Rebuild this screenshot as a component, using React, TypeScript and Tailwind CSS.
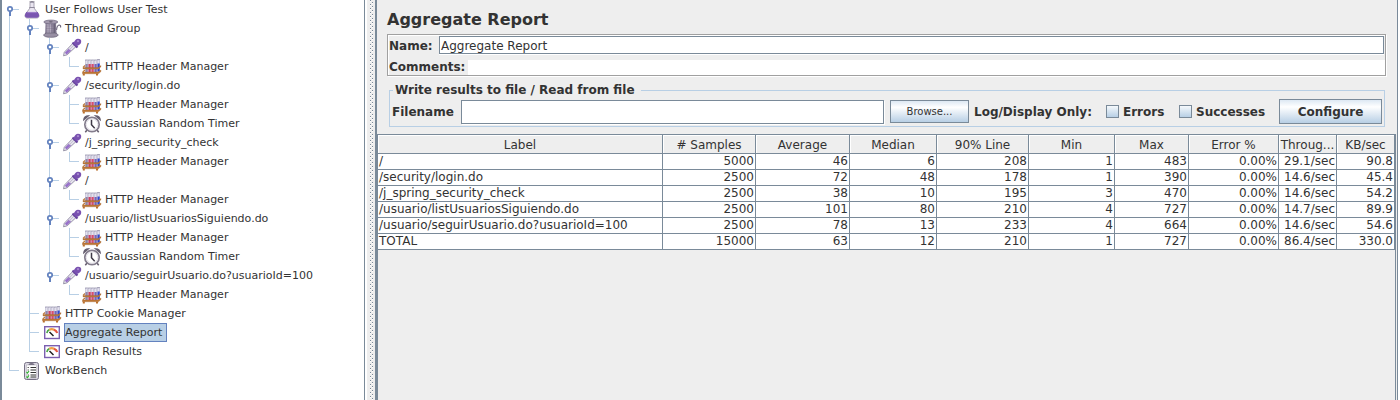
import type { ReactNode } from 'react';

type IconKind = 'flask' | 'spool' | 'dropper' | 'tubes' | 'clock' | 'gauge' | 'clipboard';

type Guide = 'none' | 'line' | 'tee' | 'end' | 'first' | 'handle' | 'handleEnd';

interface TreeRow {
  label: string;
  icon: IconKind;
  guides: Guide[];
  selected?: boolean;
}

const rows: TreeRow[] = [
  { label: 'User Follows User Test', icon: 'flask', guides: ['first'] },
  { label: 'Thread Group', icon: 'spool', guides: ['line', 'handle'] },
  { label: '/', icon: 'dropper', guides: ['line', 'line', 'handle'] },
  { label: 'HTTP Header Manager', icon: 'tubes', guides: ['line', 'line', 'line', 'end'] },
  { label: '/security/login.do', icon: 'dropper', guides: ['line', 'line', 'handle'] },
  { label: 'HTTP Header Manager', icon: 'tubes', guides: ['line', 'line', 'line', 'tee'] },
  { label: 'Gaussian Random Timer', icon: 'clock', guides: ['line', 'line', 'line', 'end'] },
  { label: '/j_spring_security_check', icon: 'dropper', guides: ['line', 'line', 'handle'] },
  { label: 'HTTP Header Manager', icon: 'tubes', guides: ['line', 'line', 'line', 'end'] },
  { label: '/', icon: 'dropper', guides: ['line', 'line', 'handle'] },
  { label: 'HTTP Header Manager', icon: 'tubes', guides: ['line', 'line', 'line', 'end'] },
  { label: '/usuario/listUsuariosSiguiendo.do', icon: 'dropper', guides: ['line', 'line', 'handle'] },
  { label: 'HTTP Header Manager', icon: 'tubes', guides: ['line', 'line', 'line', 'tee'] },
  { label: 'Gaussian Random Timer', icon: 'clock', guides: ['line', 'line', 'line', 'end'] },
  { label: '/usuario/seguirUsuario.do?usuarioId=100', icon: 'dropper', guides: ['line', 'line', 'handleEnd'] },
  { label: 'HTTP Header Manager', icon: 'tubes', guides: ['line', 'line', 'none', 'end'] },
  { label: 'HTTP Cookie Manager', icon: 'tubes', guides: ['line', 'tee'] },
  { label: 'Aggregate Report', icon: 'gauge', guides: ['line', 'tee'], selected: true },
  { label: 'Graph Results', icon: 'gauge', guides: ['line', 'end'] },
  { label: 'WorkBench', icon: 'clipboard', guides: ['end'] },
];

function GuideCell({ kind, last }: { kind: Guide; last: boolean }) {
  const top = kind === 'first' ? 9 : 0;
  const bottom = kind === 'end' || kind === 'handleEnd' ? 10 : 19;
  const branch = kind !== 'none' && kind !== 'line';
  const handle = kind === 'first' || kind === 'handle' || kind === 'handleEnd';
  return (
    <svg
      className={last ? 'h-[19px] w-[18px] shrink-0' : 'h-[19px] w-5 shrink-0'}
      viewBox={last ? '0 0 18 19' : '0 0 20 19'}
      aria-hidden="true"
    >
      {kind !== 'none' && <rect x="5" y={top} width="1" height={bottom - top} fill="#b8cfe5" />}
      {branch && <rect x="5" y="9" width="10" height="1" fill="#b8cfe5" />}
      {handle && (
        <g>
          <rect x="5" y="10" width="2" height="6" fill="#6382bf" />
          <circle cx="6" cy="9" r="2.2" fill="#fff" stroke="#6382bf" strokeWidth="1.7" />
        </g>
      )}
    </svg>
  );
}

const tube = (x: number, y: number, liquid: string) => (
  <g key={x}>
    <rect x={x - 0.4} y={y} width="2.8" height="1" fill="#a9a6bb" />
    <rect x={x} y={y + 1} width="2.2" height="12" fill="#e4e1f0" stroke="#9c98b4" strokeWidth=".4" />
    <rect x={x} y={y + 4.5} width="2.2" height="8" fill={liquid} />
  </g>
);

const pictures: Record<IconKind, ReactNode> = {
  flask: (
    <g>
      <path d="M8 2.5v5.500L3.500 14q-1.500 4 2 4h9q3.500 0 2-4L12 8V2.500z" fill="#e9e5f0" stroke="#a09bab" strokeWidth=".9" />
      <path d="M4.300 12h11.400q2 3 1.200 4.600-.5 1.100-1.900 1.100h-10q-1.400 0-1.900-1.100-.8-1.600 1.200-4.600z" fill="#7a55b0" />
      <path d="M5.200 12.500h9.600" stroke="#9c7cc9" strokeWidth="1.200" />
      <path d="M7.500 2q2.500-1 5 0" fill="none" stroke="#858090" strokeWidth="1.200" />
      <path d="M7.300 7.500h5.400" stroke="#8f8a9c" strokeWidth="1" />
    </g>
  ),
  spool: (
    <g>
      <path d="M14.500 11q.5-5 3-5 1.500.3 1 2.500" fill="none" stroke="#6f677d" strokeWidth="1.200" />
      <path d="M3.500 4h10.500l.8 12H3z" fill="#8f869c" />
      <path d="M6 5v11M8.300 5v11" stroke="#b9b1c3" strokeWidth="1.300" />
      <path d="M12.500 5v11" stroke="#6c647a" strokeWidth="1.700" />
      <path d="M4 7h10M4 9.500h10M4 12h10M4 14.500h10" stroke="#6c637b" strokeWidth=".3" />
      <ellipse cx="8.800" cy="3" rx="7" ry="1.900" fill="#a39aae" stroke="#6c637b" strokeWidth=".7" />
      <ellipse cx="8.800" cy="2.800" rx="2" ry=".6" fill="#5f576a" />
      <path d="M1.500 16q1.500-2 3-2h8.500q2 0 3.300 2-1 2.300-7.500 2.300T1.500 16z" fill="#988fa3" stroke="#665e73" strokeWidth=".7" />
    </g>
  ),
  dropper: (
    <g>
      <path d="M1.500 17.800l.8-3.600L11 5.200l3.200 3.200L5.200 16.800z" fill="#e6e4ee" stroke="#918ca1" strokeWidth=".9" />
      <path d="M2.800 14.800l4.200-4.300 2 2-4.300 4z" fill="#9770c9" />
      <path d="M12.500 6.500L7 12.200" stroke="#c4bfd0" strokeWidth="1" />
      <path d="M10.500 4.500l5 5" stroke="#65429c" strokeWidth="2.200" />
      <path d="M11.500 5.500Q13 1 16 .8q3.500 0 3.200 3.200-.5 3-5 4.200z" fill="#7951b0" />
      <circle cx="16" cy="3.200" r="1.100" fill="#a98acf" />
    </g>
  ),
  tubes: (
    <g>
      {tube(3.5, 2.5, '#8f84a8')}
      {tube(6.5, 2.5, '#cf3e63')}
      {tube(9.5, 2.5, '#d84b70')}
      {tube(12.5, 2.5, '#7665b8')}
      {tube(15.5, 2, '#3046cf')}
      <path d="M1 10.500h15l3-2v1.200L16.500 12H1z" fill="#bd7a3e" stroke="#94571f" strokeWidth=".3" />
      <path d="M.5 15h15.500l3-2v1.500L16.500 16.800H.5z" fill="#c07838" stroke="#94571f" strokeWidth=".3" />
      <path d="M1 10.500L3 8.500M.8 15L3 13" stroke="#bd7a3e" strokeWidth="1.200" />
      <path d="M1.800 16.500v2M15 16.500v2" stroke="#b96f2b" strokeWidth="2" />
    </g>
  ),
  clock: (
    <g>
      <path d="M5 16L3.300 18.300M15 16l1.700 2.300" stroke="#655d6e" strokeWidth="1.500" />
      <path d="M1.800 5.800Q2 2 6.500 1.800zM18.200 5.800Q18 2 13.500 1.800z" fill="#777080" stroke="#665f70" strokeWidth="1.300" />
      <circle cx="10" cy="10.500" r="7.200" fill="#fff" stroke="#837c8c" strokeWidth="1.700" />
      <circle cx="10" cy="10.500" r="5.700" fill="none" stroke="#d8d4de" strokeWidth=".7" />
      <path d="M9.500 5.800v5l3.200 3.400" fill="none" stroke="#3f3a47" strokeWidth="1.500" />
    </g>
  ),
  gauge: (
    <g>
      <rect x="2.700" y="3.700" width="14.600" height="11.800" fill="#fff" stroke="#7b5fb0" strokeWidth="1.400" />
      <path d="M4.800 10q.5-2.500 2.700-3.500" fill="none" stroke="#48a847" strokeWidth="1.600" />
      <path d="M7.200 6.700q2.500-1 5 0" fill="none" stroke="#f0a048" strokeWidth="2.200" />
      <path d="M12 6.700q2.500 1 3.200 3.300" fill="none" stroke="#e4573f" strokeWidth="2.200" />
      <path d="M7.500 9l4 4" stroke="#1c1c1c" strokeWidth="1.500" />
    </g>
  ),
  clipboard: (
    <g>
      <rect x="2.500" y="1.500" width="14" height="17" rx="2" fill="#dcd9e3" stroke="#777185" strokeWidth="1" />
      <rect x="4.300" y="4" width="10.400" height="13" fill="#fff" stroke="#a7a2b0" strokeWidth=".5" />
      <path d="M6.500 4q0-1.500 1.700-1.700Q9.500.5 10.800 2.300q1.700.2 1.700 1.700z" fill="#7a7487" />
      <path d="M8.500 6.500H14M8.500 9H14M8.500 11.500H14M8.500 14H14M8.500 16H14" stroke="#333" strokeWidth="1.100" />
      <path d="M5.500 6.500h1.500M5.500 9h1.500M5.500 14h1.500" stroke="#666" strokeWidth="1.200" />
      <path d="M4.500 11l1 1 1.500-2M4.500 15.500l1 1 1.500-2" fill="none" stroke="#35b535" strokeWidth="1.200" />
    </g>
  ),
};

function TreeIcon({ kind }: { kind: IconKind }) {
  return (
    <svg className="h-[19px] w-5 shrink-0" viewBox="0 0 20 19" aria-hidden="true">
      {pictures[kind]}
    </svg>
  );
}

function TestTree() {
  return (
    <nav aria-label="Test plan" className="w-[365px] shrink-0 border-r border-l-2 border-[#7a8a99] bg-white pl-[2px]">
      <ul>
        {rows.map((row, i) => (
          <li key={i} className="flex h-[19px] items-center">
            {row.guides.map((g, j) => (
              <GuideCell key={j} kind={g} last={j === row.guides.length - 1} />
            ))}
            <TreeIcon kind={row.icon} />
            <button
              type="button"
              className={
                row.selected
                  ? 'ml-[2px] h-[19px] border border-[#6382bf] bg-[#b8cfe5] pr-1 text-[11px] leading-[17px] whitespace-nowrap'
                  : 'ml-[2px] h-[19px] border border-transparent pr-1 text-[11px] leading-[17px] whitespace-nowrap'
              }
            >
              {row.label}
            </button>
          </li>
        ))}
      </ul>
    </nav>
  );
}

function Splitter() {
  return (
    <div className="flex shrink-0 border-r-2 border-[#7a8a99] bg-[#eeeeee]" role="separator" aria-orientation="vertical">
      <div className="w-[2px] bg-white" />
      <div className="w-[3px]" />
      <div className="w-px bg-[linear-gradient(#7a8a99_1px,#ffffff_1px,#ffffff_2px,transparent_2px)] bg-[length:1px_4px]" />
      <div className="w-px" />
      <div className="w-px bg-[linear-gradient(transparent_2px,#7a8a99_2px,#7a8a99_3px,#ffffff_3px)] bg-[length:1px_4px]" />
      <div className="w-[2px]" />
    </div>
  );
}

const headers = ['# Samples', 'Average', 'Median', '90% Line', 'Min', 'Max', 'Error %', 'Throug...', 'KB/sec'];

const data: string[][] = [
  ['/', '5000', '46', '6', '208', '1', '483', '0.00%', '29.1/sec', '90.8'],
  ['/security/login.do', '2500', '72', '48', '178', '1', '390', '0.00%', '14.6/sec', '45.4'],
  ['/j_spring_security_check', '2500', '38', '10', '195', '3', '470', '0.00%', '14.6/sec', '54.2'],
  ['/usuario/listUsuariosSiguiendo.do', '2500', '101', '80', '210', '4', '727', '0.00%', '14.7/sec', '89.9'],
  ['/usuario/seguirUsuario.do?usuarioId=100', '2500', '78', '13', '233', '4', '664', '0.00%', '14.6/sec', '54.6'],
  ['TOTAL', '15000', '63', '12', '210', '1', '727', '0.00%', '86.4/sec', '330.0'],
];

const headCell =
  'h-[19px] border-r border-b border-[#7a8a99] px-0 pt-[2px] pb-0 text-center font-normal whitespace-nowrap shadow-[inset_1px_1px_0_#ffffff]';

function ResultsTable() {
  return (
    <div className="mr-px grow border-t border-r border-l border-[#7a8a99]">
      <table className="w-full table-fixed border-separate border-spacing-0 text-[12px] leading-[15px]">
        <colgroup>
          <col />
          <col className="w-[93px]" />
          <col className="w-[94px]" />
          <col className="w-[87px]" />
          <col className="w-[92px]" />
          <col className="w-[86px]" />
          <col className="w-[74px]" />
          <col className="w-[90px]" />
          <col className="w-[58px]" />
          <col className="w-[58px]" />
        </colgroup>
        <thead>
          <tr>
            <th scope="col" className={headCell}>Label</th>
            {headers.map((h) => (
              <th key={h} scope="col" className={headCell}>{h}</th>
            ))}
          </tr>
        </thead>
        <tbody className="bg-white">
          {data.map((cells, i) => (
            <tr key={i}>
              {cells.map((c, j) => (
                <td
                  key={j}
                  className={
                    j === 0
                      ? 'h-4 border-r border-b border-[#7a8a99] py-0 pr-0 pl-px whitespace-nowrap'
                      : 'h-4 border-r border-b border-[#7a8a99] py-0 pr-px pl-0 text-right whitespace-nowrap'
                  }
                >
                  {c}
                </td>
              ))}
            </tr>
          ))}
        </tbody>
      </table>
    </div>
  );
}

const metal = 'border border-[#7a8a99] bg-linear-to-b from-[#dde8f3] via-white via-30% to-[#b8cfe5]';
const checkbox =
  'size-[13px] shrink-0 appearance-none border border-[#7a8a99] bg-linear-to-b from-[#f5f9fc] to-[#b8cfe5] checked:bg-[#6382bf]';

function ReportPanel() {
  return (
    <main className="flex min-w-0 grow flex-col border-r border-[#7a8a99] bg-[#eeeeee]">
      <div className="pt-[9px] pr-[11px] pb-[7px] pl-[10px]">
        <h1 className="text-[16px] leading-[22px] font-bold">Aggregate Report</h1>
        <div className="mt-[3px] flex flex-col gap-[6px] border border-[#a0a0a0] pt-px shadow-[1px_1px_0_#ffffff,inset_1px_1px_0_#ffffff]">
          <div className="flex items-center pr-px pl-px">
            <label htmlFor="name" className="w-[50px] shrink-0 pt-[2px] text-[12px] leading-4 font-bold">Name:</label>
            <input
              id="name"
              defaultValue="Aggregate Report"
              className="h-[18px] min-w-0 grow border border-[#7a8a99] bg-white px-px pt-px text-[12px] leading-[15px] shadow-[0_1px_0_#ffffff] outline-none"
            />
          </div>
          <div className="flex items-center pl-px">
            <label htmlFor="comments" className="w-[79px] shrink-0 text-[12px] leading-[15px] font-bold">Comments:</label>
            <input id="comments" className="h-[15px] min-w-0 grow bg-white px-px text-[12px] outline-none" />
          </div>
        </div>
        <fieldset className="mt-[6px] mr-px ml-[2px] border border-[#b8cfe5] px-[2px] pt-px pb-[2px]">
          <legend className="ml-px pr-[6px] pl-[2px] text-[12px] leading-4 font-bold">Write results to file / Read from file</legend>
          <div className="flex items-center">
            <label htmlFor="filename" className="w-[69px] shrink-0 text-[12px] font-bold">Filename</label>
            <input
              id="filename"
              className="mr-[6px] h-6 min-w-0 grow border border-[#7a8a99] bg-white px-1 text-[12px] shadow-[1px_1px_0_#ffffff] outline-none"
            />
            <button type="button" className={`${metal} h-[23px] w-[79px] shrink-0 text-[10px]`}>Browse...</button>
            <span className="ml-[5px] w-[132px] shrink-0 text-[12px] font-bold whitespace-nowrap">Log/Display Only:</span>
            <input id="errors" type="checkbox" className={checkbox} />
            <label htmlFor="errors" className="w-[60px] shrink-0 pl-1 text-[12px] font-bold">Errors</label>
            <input id="successes" type="checkbox" className={checkbox} />
            <label htmlFor="successes" className="w-[87px] shrink-0 pl-1 text-[12px] font-bold">Successes</label>
            <button type="button" className={`${metal} h-[25px] w-[103px] shrink-0 text-[12px] font-bold`}>Configure</button>
          </div>
        </fieldset>
      </div>
      <ResultsTable />
    </main>
  );
}

export default function App() {
  return (
    <div className="flex min-h-screen bg-white pr-[2px] font-['DejaVu_Sans','Liberation_Sans',sans-serif] text-[#333333]">
      <TestTree />
      <Splitter />
      <ReportPanel />
    </div>
  );
}
